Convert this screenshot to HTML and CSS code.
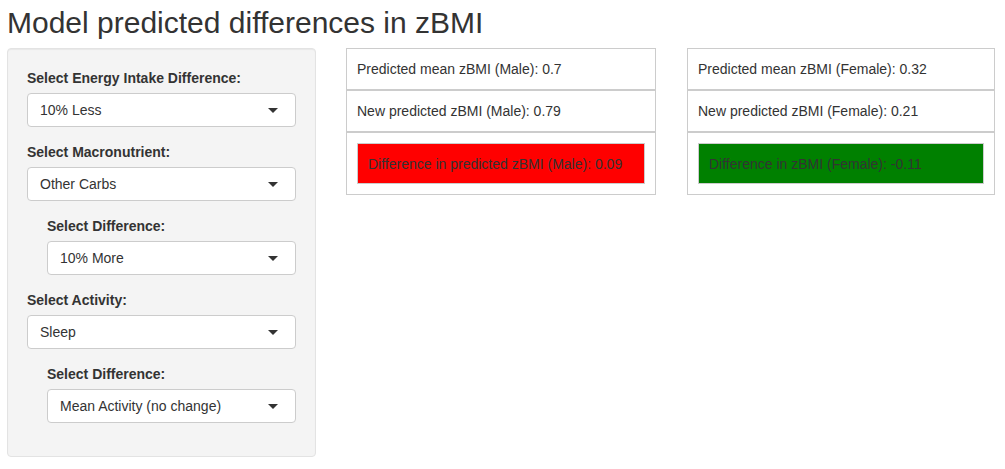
FILE: index.html
```html
<!DOCTYPE html>
<html lang="en">
<head>
  <meta charset="UTF-8">
  <title>Model predicted differences in zBMI</title>
  <link rel="stylesheet" href="styles.css">
</head>
<body>
  <div class="page">
    <h2 class="title">Model predicted differences in zBMI</h2>
    <div class="layout">
      <!-- sidebar inputs -->
      <div class="well">
        <div class="form-group">
          <label>Select Energy Intake Difference:</label>
          <div class="select-box">10% Less</div>
        </div>
        <div class="form-group">
          <label>Select Macronutrient:</label>
          <div class="select-box">Other Carbs</div>
        </div>
        <div class="form-group nested">
          <label>Select Difference:</label>
          <div class="select-box">10% More</div>
        </div>
        <div class="form-group">
          <label>Select Activity:</label>
          <div class="select-box">Sleep</div>
        </div>
        <div class="form-group nested">
          <label>Select Difference:</label>
          <div class="select-box">Mean Activity (no change)</div>
        </div>
      </div>

      <!-- male results -->
      <div class="results">
        <div class="result-row">Predicted mean zBMI (Male): 0.7</div>
        <div class="result-row">New predicted zBMI (Male): 0.79</div>
        <div class="result-row">
          <div class="diff diff-up">Difference in predicted zBMI (Male): 0.09</div>
        </div>
      </div>

      <!-- female results -->
      <div class="results results-narrow">
        <div class="result-row">Predicted mean zBMI (Female): 0.32</div>
        <div class="result-row">New predicted zBMI (Female): 0.21</div>
        <div class="result-row">
          <div class="diff diff-down">Difference in zBMI (Female): -0.11</div>
        </div>
      </div>
    </div>
  </div>
</body>
</html>
```

FILE: styles.css
```css
body {
  margin: 0;
  font-family: "Liberation Sans", Arial, sans-serif;
  font-size: 14px;
  line-height: 20px;
  color: #333;
  background: #fff;
}
.page {
  padding: 0 7px;
}
.title {
  margin: 6px 0 9px;
  font-size: 30px;
  font-weight: normal;
  line-height: 33px;
}
.layout {
  display: flex;
  align-items: flex-start;
  gap: 30px;
}
.well {
  width: 309px;
  box-sizing: border-box;
  padding: 19px 19px 18px;
  background: #f4f4f4;
  border: 1px solid #e3e3e3;
  border-radius: 4px;
  box-shadow: inset 0 1px 1px rgba(0,0,0,0.05);
}
.form-group {
  margin-bottom: 15px;
}
.form-group.nested {
  padding-left: 20px;
}
label {
  display: block;
  margin-bottom: 5px;
  font-weight: bold;
}
.select-box {
  position: relative;
  height: 34px;
  box-sizing: border-box;
  padding: 6px 12px;
  background: #fff;
  border: 1px solid #ccc;
  border-radius: 4px;
}
.select-box::after {
  content: "";
  position: absolute;
  right: 17px;
  top: 14px;
  border-style: solid;
  border-width: 5px 5px 0 5px;
  border-color: #333 transparent transparent transparent;
}
.results {
  width: 310px;
}
.results-narrow {
  width: 308px;
  margin-left: 1px;
}
.result-row {
  padding: 10px;
  border: 1px solid #ccc;
}
.diff {
  padding: 10px 10px 9px;
  border: 1px solid #ccc;
  color: #333;
}
.diff-up {
  background: #ff0000;
}
.diff-down {
  background: #008000;
}
```
